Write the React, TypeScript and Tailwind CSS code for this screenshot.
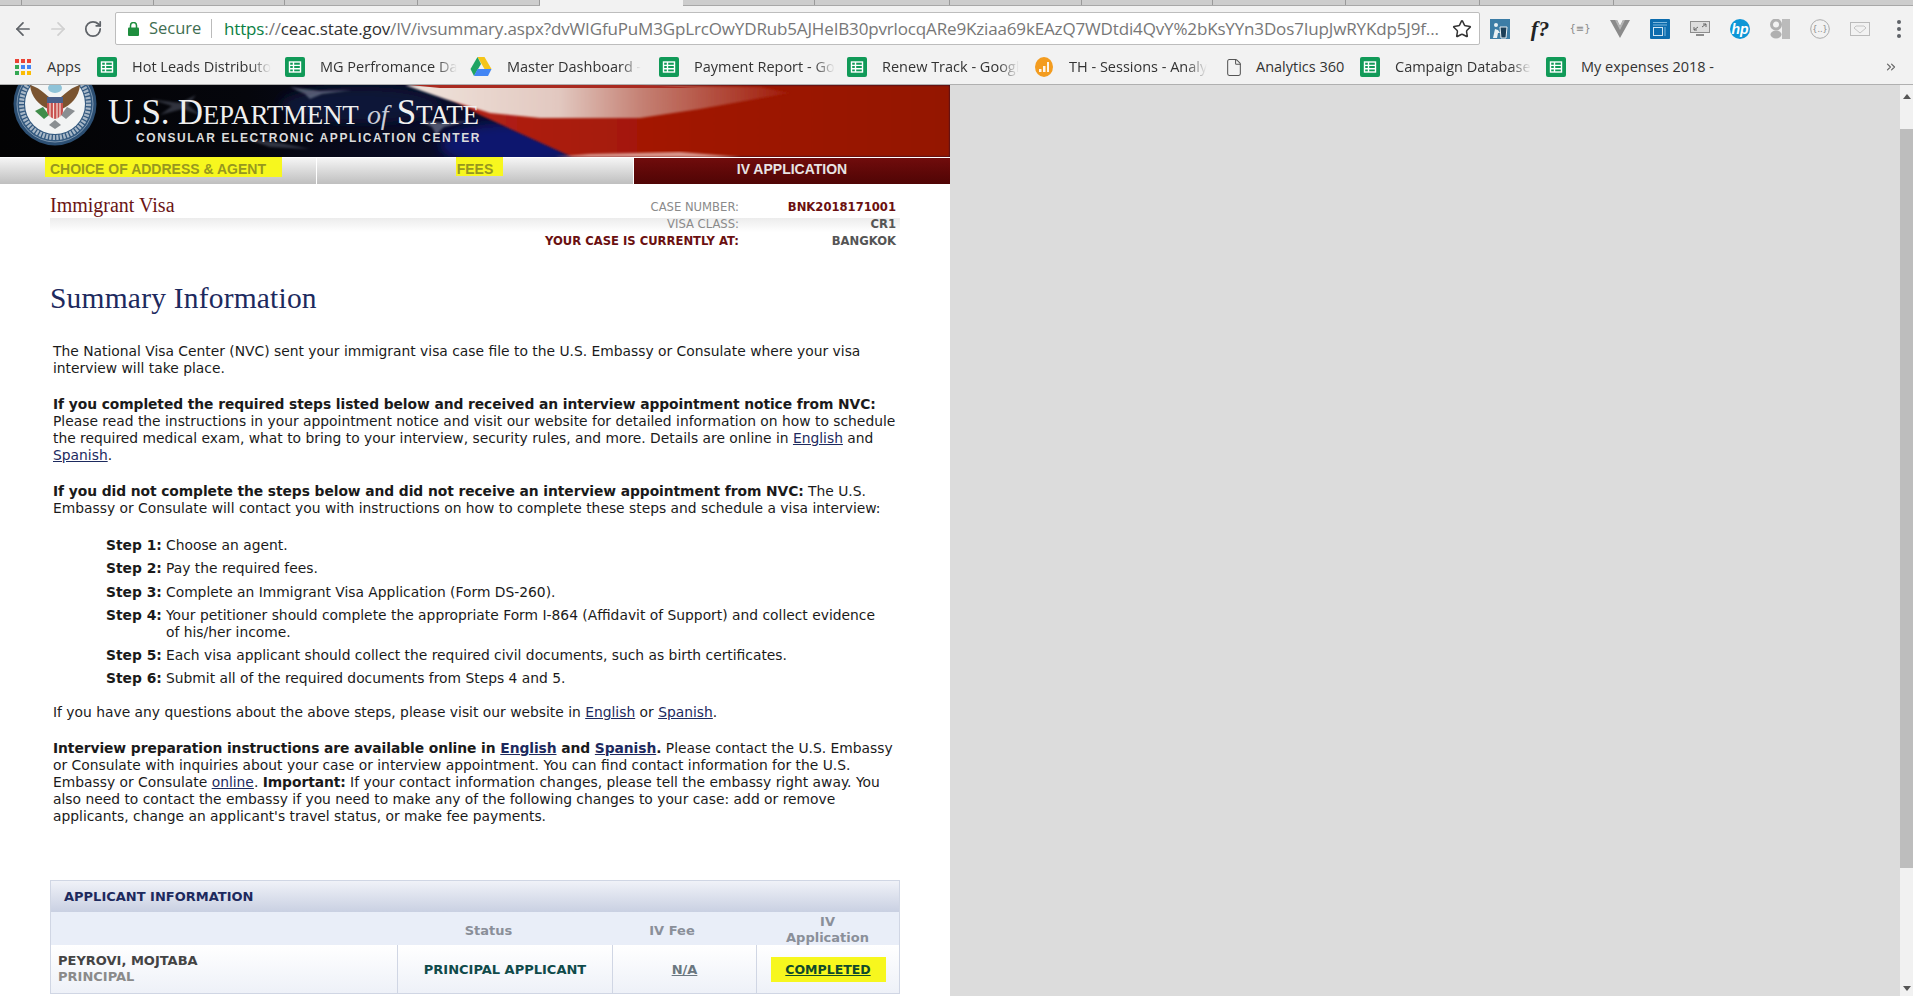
import React from "react";
import { ArrowLeft, ArrowRight, RotateCw, Star, File as FileIcon, ChevronsRight } from "lucide-react";

const Sheet = () => (
  <svg width="20" height="20" viewBox="0 0 20 20" className="shrink-0">
    <rect width="20" height="20" rx="2" fill="#119a58" />
    <rect x="4.5" y="5" width="11" height="10" fill="none" stroke="#fff" strokeWidth="1.4" />
    <path d="M4.5 8.4h11M4.5 11.7h11M8.5 5v10" stroke="#fff" strokeWidth="1.4" />
  </svg>
);
const Drive = () => (
  <svg width="22" height="20" viewBox="0 0 22 20" className="shrink-0">
    <path d="M7.5 0h7l7 12h-7z" fill="#f5c518" />
    <path d="M7.5 0L0.5 12l3.5 7 7-12z" fill="#1fa463" />
    <path d="M4 19h14l3.5-7h-14z" fill="#4285f4" />
  </svg>
);
const Analytics = () => (
  <svg width="18" height="20" viewBox="0 0 18 20" className="shrink-0">
    <ellipse cx="9" cy="10" rx="9" ry="10" fill="#f39c1f" />
    <path d="M4 15v-3h2.500v3zM8 15V9h2.500v6zM12 15V5h2v10z" fill="#fff" opacity="0.9" />
  </svg>
);
const Bookmark = ({ icon, label, w, iw = 35 }: { icon: React.ReactNode; label: string; w: number; iw?: number }) => (
  <div className="flex items-center shrink-0" style={{ width: w }}>
    <div className="shrink-0" style={{ width: iw }}>{icon}</div>
    <span className="whitespace-nowrap text-[14.5px] text-[#333] [mask-image:linear-gradient(to_right,black_85%,transparent)]">{label}</span>
  </div>
);

const Apps = () => {
  const c = ["#ea4335", "#ea4335", "#ea4335", "#34a853", "#4285f4", "#4285f4", "#34a853", "#fbbc05", "#fbbc05"];
  return (
    <div className="grid grid-cols-3 gap-[2px] w-[16px] shrink-0">
      {c.map((x, i) => <div key={i} className="h-[4px] w-[4px]" style={{ background: x }} />)}
    </div>
  );
};

const Ext = ({ children }: { children: React.ReactNode }) => <div className="w-5 h-5 shrink-0 flex items-center justify-center">{children}</div>;

const Seal = () => (
  <svg width="84" height="72" viewBox="0 0 84 72" className="absolute left-[13px] top-0">
    <circle cx="42" cy="19" r="41.5" fill="#2c4f73" />
    <circle cx="42" cy="19" r="38" fill="#33597f" stroke="#9fb2c4" strokeWidth="0.7" />
    <circle cx="42" cy="19" r="33.5" fill="none" stroke="#c5d0da" strokeWidth="5" strokeDasharray="2.2 1.3" opacity="0.8" />
    <circle cx="42" cy="19" r="30" fill="#f2f4f4" />
    <path d="M35 24C26 20 18 12 17 0 25 2 31 8 36 12z" fill="#7a5430" />
    <path d="M49 24C58 20 66 12 67 0 59 2 53 8 48 12z" fill="#7a5430" />
    <path d="M22 26l9 8 5-4-6-8z" fill="#3f8d4a" />
    <path d="M62 26l-9 8-5-4 6-8z" fill="#8a8f92" />
    <rect x="34" y="12" width="16" height="6" fill="#4a5f8a" />
    <path d="M34 18h16v8c0 4-4 7-8 8-4-1-8-4-8-8z" fill="#c8504f" />
    <path d="M37 18v14M40.500 18v16M44 18v16M47 18v14" stroke="#f2dfd8" strokeWidth="1.2" />
    <path d="M36 40l6-5 6 5-6 4z" fill="#8a8f92" />
    <ellipse cx="42" cy="3" rx="7" ry="5" fill="#8fc3d8" />
  </svg>
);

const BannerArt = () => (
  <svg width="950" height="72" viewBox="0 0 950 72" className="absolute inset-0">
    <defs>
      <linearGradient id="dark" x1="0" x2="1" y1="0" y2="0">
        <stop offset="0" stopColor="#030304" />
        <stop offset="0.26" stopColor="#05060c" />
        <stop offset="0.42" stopColor="#080a22" />
        <stop offset="0.6" stopColor="#0a0f34" />
      </linearGradient>
      <linearGradient id="red" x1="0" x2="1" y1="0" y2="0">
        <stop offset="0" stopColor="#b5241a" />
        <stop offset="0.5" stopColor="#a01602" />
        <stop offset="1" stopColor="#941400" />
      </linearGradient>
      <linearGradient id="white" x1="0" x2="1" y1="0" y2="0">
        <stop offset="0" stopColor="#efe4dc" />
        <stop offset="0.4" stopColor="#e2c8c0" />
        <stop offset="0.62" stopColor="#c47f72" />
        <stop offset="1" stopColor="#a01a08" />
      </linearGradient>
      <filter id="b1"><feGaussianBlur stdDeviation="1" /></filter>
      <filter id="b4"><feGaussianBlur stdDeviation="6" /></filter>
    </defs>
    <rect width="950" height="72" fill="url(#dark)" />
    <ellipse cx="510" cy="60" rx="70" ry="22" fill="#10186e" filter="url(#b4)" />
    <ellipse cx="360" cy="20" rx="80" ry="18" fill="#0e1338" filter="url(#b4)" />
    <path d="M425 0H950V72H572L480 30Z" fill="url(#red)" filter="url(#b1)" />
    <path d="M405 0H600L760 2 790 8 700 24 640 33H540L490 28 445 14Z" fill="url(#white)" filter="url(#b1)" />
    <path d="M410 0H640L700 3H500L440 3Z" fill="#a92a20" />
    <path d="M555 72L590 69 680 67 740 72Z" fill="#d9968c" filter="url(#b1)" />
    <g fill="#8b93a8" opacity="0.55" filter="url(#b1)">
      <path d="M290 2L320 6 352 5 322 9 310 14 305 9Z" />
      <path d="M150 14L180 18 196 10 188 20 200 30 182 24 160 30 172 21Z" opacity="0.6" />
      <path d="M420 36L444 38 470 36 444 42 436 50 432 42Z" />
      <path d="M240 52L280 58 310 64 270 62Z" opacity="0.6" />
    </g>
  </svg>
);

const NavTab = ({ children, active }: { children: React.ReactNode; active?: boolean }) => (
  <div className={`flex-1 h-[27px] pb-[3px] border-t border-white flex items-center justify-center text-[14px] font-bold [font-family:'Liberation_Sans',sans-serif] ${active ? "bg-linear-to-b from-[#700c0c] to-[#500505] text-[#e8e4e4]" : "bg-linear-to-b from-[#f5f5f5] to-[#bfbfbf] text-[#96971f] border-r border-r-white"}`}>
    {children}
  </div>
);

const P = ({ className = "", children }: { className?: string; children: React.ReactNode }) => <p className={`pl-[3px] whitespace-nowrap [&_b]:tracking-[-0.08px] ${className}`}>{children}</p>;
const L = ({ children }: { children: React.ReactNode }) => <a className="underline text-[#1d2a5e]">{children}</a>;
const Step = ({ n, children }: { n: number; children: React.ReactNode }) => (
  <div className="flex mb-[6.25px]">
    <b className="w-[60px] shrink-0">Step {n}:</b>
    <div>{children}</div>
  </div>
);

export default function App() {
  const tabs = [132, 131, 133, 122];
  const tabs2 = [132, 135, 132, 131, 133, 134, 134];
  return (
    <div className="h-screen w-full overflow-hidden flex flex-col bg-[#dcdcdc] [font-family:'Open_Sans',sans-serif]">
      {/* tab strip */}
      <div className="h-[6px] shrink-0 flex bg-[#cdcdcd] border-b border-[#a8a8a8]">
        <div className="w-[22px] shrink-0 border-r border-[#9a9a9a]" />
        {tabs.map((w, i) => <div key={i} className="shrink-0 border-r border-[#9a9a9a]" style={{ width: w }} />)}
        <div className="w-[143px] shrink-0 bg-[#f2f2f2] -mb-px" />
        {tabs2.map((w, i) => <div key={i} className="shrink-0 border-r border-[#9a9a9a]" style={{ width: w }} />)}
      </div>
      {/* toolbar */}
      <div className="h-[45px] shrink-0 bg-[#f2f2f2] flex items-start pt-[6px] pl-[15px]">
        <div className="flex items-center h-[33px] gap-[19px] w-[100px] shrink-0">
          <ArrowLeft size={16} strokeWidth={2} className="text-[#5f6368] scale-[1.3] shrink-0" />
          <ArrowRight size={16} strokeWidth={2} className="text-[#d0d0d0] scale-[1.3] shrink-0" />
          <RotateCw size={16} strokeWidth={2.2} className="text-[#5f6368] scale-[1.2] shrink-0" />
        </div>
        <div className="w-[1365px] h-[33px] shrink-0 bg-white border border-[#bdbdbd] rounded-[2px] flex items-center pl-[12px] pr-[7px]">
          <svg width="11" height="14" viewBox="0 0 11 14" className="shrink-0">
            <rect y="5.500" width="11" height="8.500" rx="1" fill="#1e8e3e" />
            <path d="M2.500 6V3.500a3 3 0 0 1 6 0V6" fill="none" stroke="#1e8e3e" strokeWidth="1.500" />
          </svg>
          <span className="ml-[10px] text-[16.500px] text-[#3f6e52] w-[62px] shrink-0">Secure</span>
          <span className="h-[19px] w-px bg-[#bbb] shrink-0" />
          <div className="ml-[12px] flex-1 min-w-0 whitespace-nowrap text-[17px] tracking-[-0.15px] text-[#777]">
            <span className="text-[#0b8043]">https</span>://<span className="text-[#333]">ceac.state.gov</span>/IV/ivsummary.aspx?dvWIGfuPuM3GpLrcOwYDRub5AJHeIB30pvrlocqARe9Kziaa69kEAzQ7WDtdi4QvY%2bKsYYn3Dos7IupJwRYKdp5J9f...
          </div>
          <Star size={20} strokeWidth={1.8} className="text-[#333] shrink-0 ml-2" />
        </div>
        <div className="flex items-center h-[33px] gap-5 ml-[10px]">
          <Ext>
            <svg width="20" height="20" viewBox="0 0 20 20">
              <rect width="20" height="20" fill="#3c7da6" />
              <circle cx="6" cy="6" r="2" fill="#e8f0f4" />
              <path d="M3 19l2-9 3 1 2 3-2 0-1 5z" fill="#e8f0f4" />
              <path d="M10 8h7l-1 11h-5z" fill="#1b3f58" stroke="#e8f0f4" strokeWidth="1" />
            </svg>
          </Ext>
          <Ext><span className="[font-family:'Liberation_Serif',serif] italic font-bold text-[22px] text-[#222] leading-none">f?</span></Ext>
          <Ext><span className="[font-family:'DejaVu_Sans',sans-serif] text-[10px] text-[#888]">{"{≡}"}</span></Ext>
          <Ext>
            <svg width="20" height="18" viewBox="0 0 20 18"><path d="M0 0h7l3 6 3-6h7L10 18z" fill="#8b8b8b" /><path d="M7 0l3 6 3-6h2l-5 10L5 0z" fill="#b5b5b5" /></svg>
          </Ext>
          <Ext>
            <svg width="20" height="20" viewBox="0 0 20 20"><rect width="20" height="20" rx="1" fill="#0c6cae" /><path d="M3 3.500h14M3 6h14" stroke="#7db8de" /><rect x="3.500" y="8.500" width="9" height="8" fill="none" stroke="#cfe4f2" /><path d="M15 8v9" stroke="#7db8de" /></svg>
          </Ext>
          <Ext>
            <svg width="20" height="16" viewBox="0 0 20 16"><rect x="0.500" y="0.500" width="19" height="11" fill="#ddd" stroke="#8e8e8e" /><path d="M4 9l4-3M16 3l-4 3M13 3h3v3M4 6v3h3" stroke="#666" fill="none" /><path d="M6 14h8" stroke="#8e8e8e" strokeWidth="2" /></svg>
          </Ext>
          <Ext>
            <svg width="20" height="20" viewBox="0 0 20 20"><circle cx="10" cy="10" r="10" fill="#0d96d6" /><text x="10" y="14.500" textAnchor="middle" fontSize="14" fontStyle="italic" fontWeight="700" fill="#fff" fontFamily="Liberation Sans, sans-serif">hp</text></svg>
          </Ext>
          <Ext>
            <svg width="20" height="20" viewBox="0 0 20 20"><rect x="12" width="8" height="20" fill="#bbb" /><circle cx="6" cy="5.500" r="4.500" fill="none" stroke="#b0b0b0" strokeWidth="3" /><ellipse cx="6" cy="15.500" rx="5.500" ry="4" fill="#b0b0b0" /></svg>
          </Ext>
          <Ext>
            <svg width="20" height="20" viewBox="0 0 20 20"><circle cx="10" cy="10" r="9.300" fill="none" stroke="#aaa" /><text x="10" y="13" textAnchor="middle" fontSize="8" fill="#888" fontFamily="DejaVu Sans, sans-serif">{"{..}"}</text></svg>
          </Ext>
          <Ext>
            <svg width="20" height="14" viewBox="0 0 20 14"><rect x="0.500" y="0.500" width="19" height="13" fill="none" stroke="#bbb" /><path d="M6 4h8l2 2-6 5-6-5z" fill="none" stroke="#c4c4c4" /></svg>
          </Ext>
          <div className="ml-[7px] flex flex-col gap-[3px]">
            <div className="w-1 h-1 rounded-full bg-[#5f6368]" /><div className="w-1 h-1 rounded-full bg-[#5f6368]" /><div className="w-1 h-1 rounded-full bg-[#5f6368]" />
          </div>
        </div>
      </div>
      {/* bookmarks */}
      <div className="h-[34px] shrink-0 bg-[#f2f2f2] border-b border-[#b0b0b0] flex items-center pl-[15px] pb-[1px] text-[#333]">
        <div className="w-[82px] shrink-0 flex items-center">
          <Apps />
          <span className="ml-[16px] text-[14.500px]">Apps</span>
        </div>
        <Bookmark icon={<Sheet />} label="Hot Leads Distributo" w={188} />
        <Bookmark icon={<Sheet />} label="MG Perfromance Da" w={185} />
        <Bookmark icon={<Drive />} label="Master Dashboard -" w={189} iw={37} />
        <Bookmark icon={<Sheet />} label="Payment Report - Go" w={188} />
        <Bookmark icon={<Sheet />} label="Renew Track - Googl" w={188} />
        <Bookmark icon={<Analytics />} label="TH - Sessions - Analy" w={190} iw={34} />
        <div className="w-[135px] shrink-0 flex items-center">
          <FileIcon size={19} strokeWidth={1.300} className="text-[#555] w-[32px] shrink-0 -ml-[7px] mr-[6px]" />
          <span className="text-[14.500px]">Analytics 360</span>
        </div>
        <Bookmark icon={<Sheet />} label="Campaign Database" w={186} />
        <div className="flex items-center w-[352px] shrink-0">
          <div className="w-[35px] shrink-0"><Sheet /></div>
          <span className="text-[14.500px] whitespace-nowrap">My expenses 2018 -</span>
          <ChevronsRight size={14} className="text-[#666] ml-auto" />
        </div>
      </div>
      {/* page */}
      <div className="flex-1 min-h-0 flex">
        <div className="w-[950px] shrink-0 bg-white overflow-hidden [font-family:'DejaVu_Sans',sans-serif] text-[13.850px] leading-[17px] text-[#1a1a1a]">
          <div className="relative h-[72px] w-full overflow-hidden">
            <BannerArt />
            <Seal />
            <div className="relative pl-[108px] pt-[10px] text-[#f0f0f0]">
              <div className="[font-family:'Liberation_Serif',serif] leading-[35px] h-[35px] whitespace-nowrap text-[35px] tracking-[-0.25px]">
                U.S. D<span className="text-[27px]">EPARTMENT</span> <i className="text-[28px] text-[#c8ccd8]">of</i> S<span className="text-[27px]">TATE</span>
              </div>
              <div className="pl-[28px] mt-[1px] [font-family:'Liberation_Sans',sans-serif] font-bold text-[12px] leading-[14px] tracking-[1.57px] text-[#dcdcdc] whitespace-nowrap">CONSULAR ELECTRONIC APPLICATION CENTER</div>
            </div>
          </div>
          <div className="flex">
            <NavTab><span className="relative"><span className="absolute -left-[5px] -right-[16px] -top-[4px] h-[20px] bg-[#f7f71e]" /><span className="relative">CHOICE OF ADDRESS &amp; AGENT</span></span></NavTab>
            <NavTab><span className="relative"><span className="absolute -left-[1px] -right-[10px] -top-[4px] h-[19px] bg-[#f7f71e]" /><span className="relative">FEES</span></span></NavTab>
            <NavTab active>IV APPLICATION</NavTab>
          </div>
          <div className="ml-[50px] w-[850px] mt-[15px] flex justify-between bg-[linear-gradient(to_bottom,#ececec,#ffffff)] bg-no-repeat bg-[size:100%_14px] bg-[position:0_19px]">
            <div className="[font-family:'Liberation_Serif',serif] text-[20px] text-[#6b1414] leading-[17px] -mt-[2px]">Immigrant Visa</div>
            <div className="mr-[4px] grid grid-cols-[auto_157px] text-[11.600px] leading-[17px] font-bold text-right">
              <span className="text-[#8a8a8a] font-normal">CASE NUMBER:</span><span className="text-[#6b1010]">BNK2018171001</span>
              <span className="text-[#8a8a8a] font-normal">VISA CLASS:</span><span className="text-[#555]">CR1</span>
              <span className="text-[#6b1010]">YOUR CASE IS CURRENTLY AT:</span><span className="text-[#555]">BANGKOK</span>
            </div>
          </div>
          <div className="ml-[50px] w-[850px]">
            <h1 className="mt-[30px] [font-family:'Liberation_Serif',serif] text-[29.500px] leading-[36px] text-[#1d2a5e] tracking-[0.2px]">Summary Information</h1>
            <P className="mt-[27px]">The National Visa Center (NVC) sent your immigrant visa case file to the U.S. Embassy or Consulate where your visa<br />interview will take place.</P>
            <P className="mt-[19px]"><b>If you completed the required steps listed below and received an interview appointment notice from NVC:</b><br />Please read the instructions in your appointment notice and visit our website for detailed information on how to schedule<br />the required medical exam, what to bring to your interview, security rules, and more. Details are online in <L>English</L> and<br /><L>Spanish</L>.</P>
            <P className="mt-[19px]"><b>If you did not complete the steps below and did not receive an interview appointment from NVC:</b> The U.S.<br />Embassy or Consulate will contact you with instructions on how to complete these steps and schedule a visa interview:</P>
            <div className="mt-[20px] ml-[56px]">
              <Step n={1}>Choose an agent.</Step>
              <Step n={2}>Pay the required fees.</Step>
              <Step n={3}>Complete an Immigrant Visa Application (Form DS-260).</Step>
              <Step n={4}>Your petitioner should complete the appropriate Form I-864 (Affidavit of Support) and collect evidence<br />of his/her income.</Step>
              <Step n={5}>Each visa applicant should collect the required civil documents, such as birth certificates.</Step>
              <Step n={6}>Submit all of the required documents from Steps 4 and 5.</Step>
            </div>
            <P className="mt-[17px]">If you have any questions about the above steps, please visit our website in <L>English</L> or <L>Spanish</L>.</P>
            <P className="mt-[19px]"><b>Interview preparation instructions are available online in <L>English</L> and <L>Spanish</L>.</b> Please contact the U.S. Embassy<br />or Consulate with inquiries about your case or interview appointment. You can find contact information for the U.S.<br />Embassy or Consulate <L>online</L>. <b>Important:</b> If your contact information changes, please tell the embassy right away. You<br />also need to contact the embassy if you need to make any of the following changes to your case: add or remove<br />applicants, change an applicant's travel status, or make fee payments.</P>
            {/* table */}
            <div className="mt-[55px] border-x border-t border-[#d0d6e4] text-[13px] font-bold">
              <div className="h-[31px] flex items-center pl-[13px] bg-linear-to-b from-[#f0f2f8] to-[#c9d0e2] text-[#1d2a5e]">APPLICANT INFORMATION</div>
              <div className="h-[33px] flex bg-[#e9eef8] text-[#8a8f99] leading-[16px] text-center">
                <div className="w-[346px] shrink-0" />
                <div className="w-[184px] shrink-0 self-center pt-[4px] pr-[1px]">Status</div>
                <div className="w-[144px] shrink-0 self-center pt-[4px] pl-[38px]">IV Fee</div>
                <div className="flex-1 self-center pl-[31px] pt-[2px]">IV<br />Application</div>
              </div>
              <div className="h-[49px] flex bg-linear-to-b from-white to-[#eef1f8] border-b border-[#d0d6e4] text-center">
                <div className="w-[346px] shrink-0 pl-[7px] text-left leading-[16px] self-center text-[#444]">PEYROVI, MOJTABA<br /><span className="text-[#8a8a8a]">PRINCIPAL</span></div>
                <div className="w-[215px] shrink-0 border-l border-[#d0d6e4] flex items-center justify-center text-[#0f4a4a]">PRINCIPAL APPLICANT</div>
                <div className="w-[144px] shrink-0 border-l border-[#d0d6e4] flex items-center justify-center text-[#6b7780] underline">N/A</div>
                <div className="flex-1 border-l border-[#d0d6e4] flex items-center justify-center">
                  <span className="bg-[#f7f71e] w-[115px] h-[25px] flex items-center justify-center text-[12.500px] text-[#0f4a2a] underline">COMPLETED</span>
                </div>
              </div>
            </div>
          </div>
        </div>
        <div className="flex-1 bg-[#dcdcdc]" />
        <div className="w-[13px] shrink-0 bg-[#f1f1f1] flex flex-col items-center">
          <div className="h-[44px] shrink-0 flex items-start justify-center pt-[9px]">
            <div className="w-0 h-0 border-x-[4px] border-x-transparent border-b-[5px] border-b-[#555]" />
          </div>
          <div className="h-[739px] w-full shrink-0 bg-[#bdbdbd]" />
          <div className="flex-1 flex items-end justify-center pb-[5px]">
            <div className="w-0 h-0 border-x-[4px] border-x-transparent border-t-[5px] border-t-[#555]" />
          </div>
        </div>
      </div>
    </div>
  );
}
